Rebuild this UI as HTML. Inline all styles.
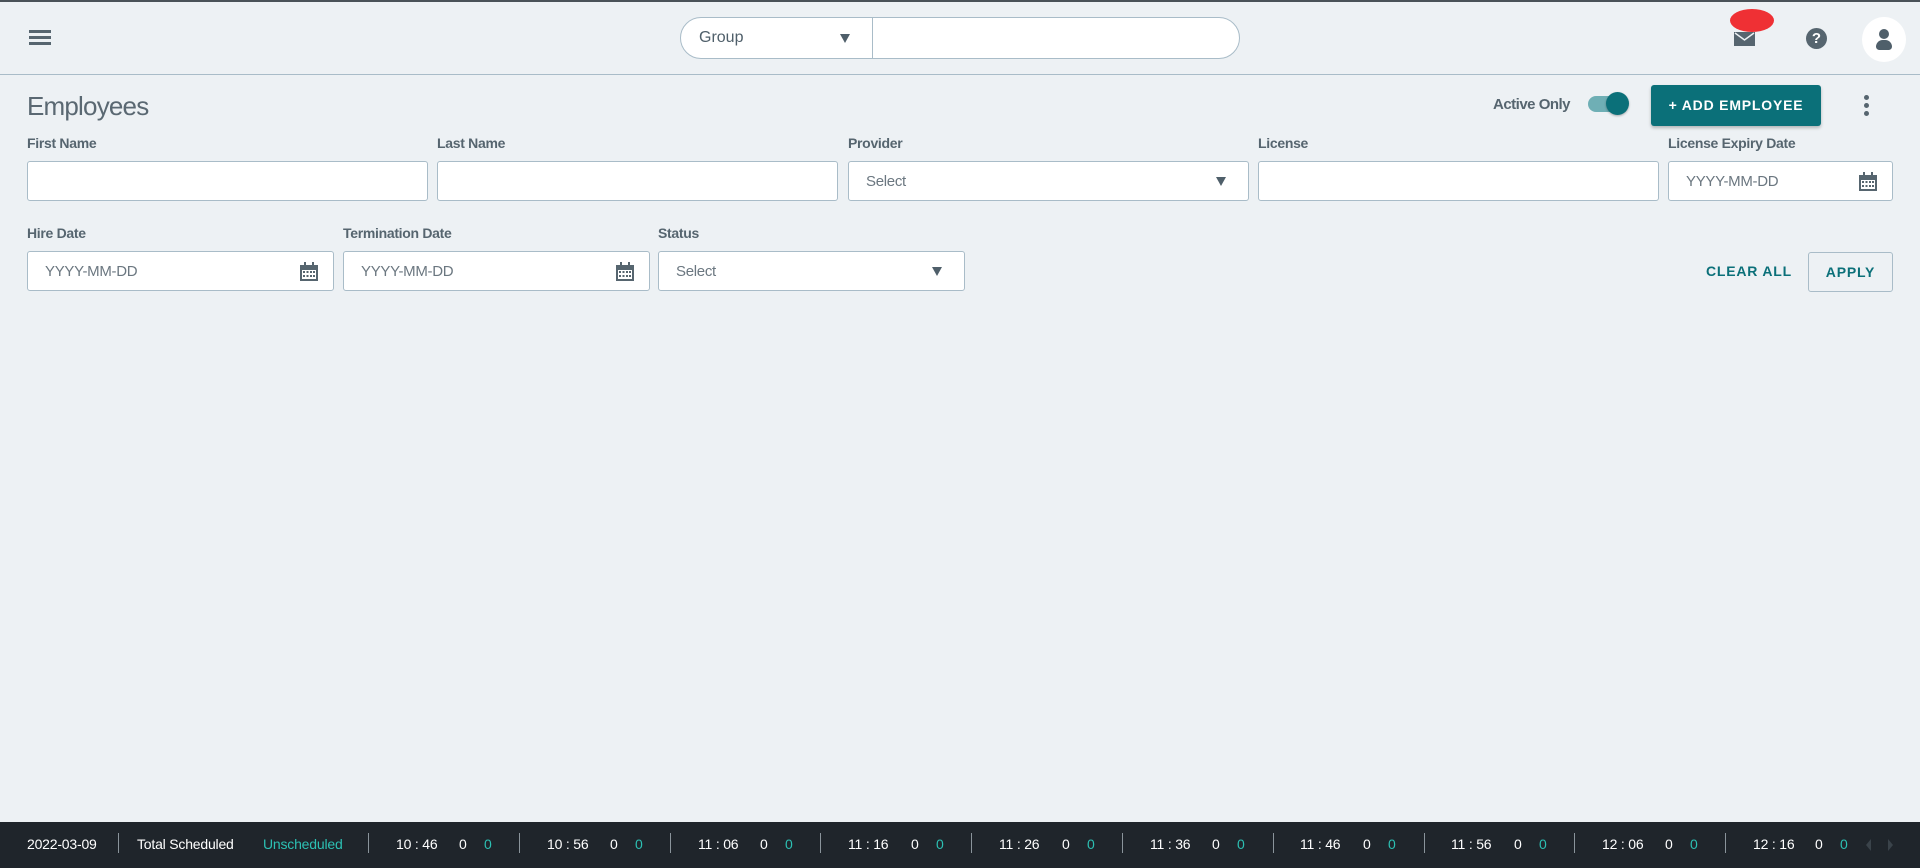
<!DOCTYPE html>
<html><head><meta charset="utf-8"><style>
*{box-sizing:border-box;margin:0;padding:0}
body{width:1920px;height:866px;background:#edf1f4;font-family:"Liberation Sans",sans-serif;color:#4f5f6a;position:relative;overflow:hidden;border-top:2px solid #4a5258}
.a{position:absolute}
.lbl{position:absolute;font-size:14px;font-weight:bold;color:#56656f;letter-spacing:-0.3px}
.in{position:absolute;background:#fff;border:1px solid #a9bcc8;border-radius:3px;height:40px}
.ph{position:absolute;left:17px;top:11px;font-size:15px;color:#6b7780;letter-spacing:-0.3px}
.tri{position:absolute;width:0;height:0;border-left:5px solid transparent;border-right:5px solid transparent;border-top:9px solid #4f5f6a}
.cal{position:absolute;right:14px;top:10px}
.f{position:absolute;top:834px;font-size:14px;color:#fff;letter-spacing:-0.2px}
.t{color:#2cc0b3}
.dv{position:absolute;top:831px;width:1px;height:20px;background:#8a949b}
</style></head><body>
<div class="a" style="left:29px;top:28px;width:22px;height:3px;background:#56656f;box-shadow:0 6px 0 #56656f,0 12px 0 #56656f"></div>
<div class="a" style="left:680px;top:15px;width:560px;height:42px;background:#fff;border:1px solid #a9bcc8;border-radius:21px"></div>
<div class="a" style="left:872px;top:16px;width:1px;height:40px;background:#a9bcc8"></div>
<div class="a" style="left:699px;top:27px;font-size:16px;color:#4f5f6a">Group</div>
<div class="tri" style="left:840px;top:32px"></div>
<div class="a" style="left:0;top:72px;width:1920px;height:1px;background:#a9bcc8"></div>
<div class="a" style="left:1730px;top:7px;width:44px;height:23px;border-radius:50%;background:#ef3034"></div>
<div class="a" style="left:1734px;top:30px;width:21px;height:14px;background:#56656f"></div>
<svg class="a" style="left:1734px;top:30px" width="21" height="14"><path d="M1 1 L10.5 8 L20 1" stroke="#edf1f4" stroke-width="1.5" fill="none"/></svg>
<div class="a" style="left:1806px;top:26px;width:21px;height:21px;border-radius:50%;background:#56656f;color:#fff;font-size:15px;font-weight:bold;text-align:center;line-height:21px">?</div>
<div class="a" style="left:1862px;top:15px;width:44px;height:45px;border-radius:50%;background:#fff"></div>
<div class="a" style="left:1879px;top:27px;width:10px;height:10px;border-radius:50%;background:#4f5f6a"></div>
<div class="a" style="left:1876px;top:38px;width:16px;height:10px;border-radius:8px 8px 4px 4px;background:#4f5f6a"></div>
<div class="a" style="left:27px;top:89px;font-size:26px;color:#5a6872;letter-spacing:-0.8px">Employees</div>
<div class="a" style="left:1493px;top:94px;font-size:15px;color:#56656f;font-weight:bold;letter-spacing:-0.5px">Active Only</div>
<div class="a" style="left:1588px;top:94px;width:36px;height:16px;border-radius:8px;background:#6fafb5"></div>
<div class="a" style="left:1606px;top:90px;width:23px;height:23px;border-radius:50%;background:#0b7079;box-shadow:0 1px 2px rgba(0,0,0,.3)"></div>
<div class="a" style="left:1651px;top:83px;width:170px;height:41px;border-radius:3px;background:#0b7079;color:#fff;font-size:14px;font-weight:bold;letter-spacing:0.8px;text-align:center;line-height:41px;box-shadow:0 2px 3px rgba(0,0,0,.25)">+ ADD EMPLOYEE</div>
<div class="a" style="left:1864px;top:93px;width:5px;height:5px;border-radius:50%;background:#56656f;box-shadow:0 8px 0 #56656f,0 16px 0 #56656f"></div>

<div class="lbl" style="left:27px;top:133px">First Name</div>
<div class="lbl" style="left:437px;top:133px">Last Name</div>
<div class="lbl" style="left:848px;top:133px">Provider</div>
<div class="lbl" style="left:1258px;top:133px">License</div>
<div class="lbl" style="left:1668px;top:133px">License Expiry Date</div>
<div class="in" style="left:27px;top:159px;width:401px"></div>
<div class="in" style="left:437px;top:159px;width:401px"></div>
<div class="in" style="left:848px;top:159px;width:401px"><div class="ph">Select</div><div class="tri" style="right:22px;top:15px"></div></div>
<div class="in" style="left:1258px;top:159px;width:401px"></div>
<div class="in" style="left:1668px;top:159px;width:225px"><div class="ph">YYYY-MM-DD</div>
<svg class="cal" width="20" height="20"><rect x="1" y="3" width="18" height="16" fill="#56656f"/><rect x="3" y="8" width="14" height="9" fill="#fff"/><g fill="#56656f"><rect x="4" y="9" width="2" height="2"/><rect x="7.5" y="9" width="2" height="2"/><rect x="11" y="9" width="2" height="2"/><rect x="14" y="9" width="2" height="2"/><rect x="4" y="13" width="2" height="2"/><rect x="7.5" y="13" width="2" height="2"/><rect x="11" y="13" width="2" height="2"/><rect x="14" y="13" width="2" height="2"/><rect x="5" y="0" width="2" height="5"/><rect x="13" y="0" width="2" height="5"/></g></svg></div>

<div class="lbl" style="left:27px;top:223px">Hire Date</div>
<div class="lbl" style="left:343px;top:223px">Termination Date</div>
<div class="lbl" style="left:658px;top:223px">Status</div>
<div class="in" style="left:27px;top:249px;width:307px"><div class="ph">YYYY-MM-DD</div>
<svg class="cal" width="20" height="20"><rect x="1" y="3" width="18" height="16" fill="#56656f"/><rect x="3" y="8" width="14" height="9" fill="#fff"/><g fill="#56656f"><rect x="4" y="9" width="2" height="2"/><rect x="7.5" y="9" width="2" height="2"/><rect x="11" y="9" width="2" height="2"/><rect x="14" y="9" width="2" height="2"/><rect x="4" y="13" width="2" height="2"/><rect x="7.5" y="13" width="2" height="2"/><rect x="11" y="13" width="2" height="2"/><rect x="14" y="13" width="2" height="2"/><rect x="5" y="0" width="2" height="5"/><rect x="13" y="0" width="2" height="5"/></g></svg></div>
<div class="in" style="left:343px;top:249px;width:307px"><div class="ph">YYYY-MM-DD</div>
<svg class="cal" width="20" height="20"><rect x="1" y="3" width="18" height="16" fill="#56656f"/><rect x="3" y="8" width="14" height="9" fill="#fff"/><g fill="#56656f"><rect x="4" y="9" width="2" height="2"/><rect x="7.5" y="9" width="2" height="2"/><rect x="11" y="9" width="2" height="2"/><rect x="14" y="9" width="2" height="2"/><rect x="4" y="13" width="2" height="2"/><rect x="7.5" y="13" width="2" height="2"/><rect x="11" y="13" width="2" height="2"/><rect x="14" y="13" width="2" height="2"/><rect x="5" y="0" width="2" height="5"/><rect x="13" y="0" width="2" height="5"/></g></svg></div>
<div class="in" style="left:658px;top:249px;width:307px"><div class="ph">Select</div><div class="tri" style="right:22px;top:15px"></div></div>
<div class="a" style="left:1706px;top:261px;font-size:14px;font-weight:bold;color:#0b7079;letter-spacing:0.8px">CLEAR ALL</div>
<div class="a" style="left:1808px;top:250px;width:85px;height:40px;border:1px solid #a9bcc8;border-radius:3px;font-size:14px;font-weight:bold;color:#0b7079;letter-spacing:0.8px;text-align:center;line-height:38px">APPLY</div>

<div class="a" style="left:0;top:820px;width:1920px;height:46px;background:#1f252b"></div>
<div class="f" style="left:27px">2022-03-09</div>
<div class="dv" style="left:118px"></div>
<div class="f" style="left:137px">Total Scheduled</div>
<div class="f t" style="left:263px">Unscheduled</div>
<div class="dv" style="left:368px"></div>
<div class="f" style="left:396px">10 : 46</div><div class="f" style="left:459px">0</div><div class="f t" style="left:484px">0</div><div class="dv" style="left:519px"></div>
<div class="f" style="left:547px">10 : 56</div><div class="f" style="left:610px">0</div><div class="f t" style="left:635px">0</div><div class="dv" style="left:670px"></div>
<div class="f" style="left:698px">11 : 06</div><div class="f" style="left:760px">0</div><div class="f t" style="left:785px">0</div><div class="dv" style="left:820px"></div>
<div class="f" style="left:848px">11 : 16</div><div class="f" style="left:911px">0</div><div class="f t" style="left:936px">0</div><div class="dv" style="left:971px"></div>
<div class="f" style="left:999px">11 : 26</div><div class="f" style="left:1062px">0</div><div class="f t" style="left:1087px">0</div><div class="dv" style="left:1122px"></div>
<div class="f" style="left:1150px">11 : 36</div><div class="f" style="left:1212px">0</div><div class="f t" style="left:1237px">0</div><div class="dv" style="left:1273px"></div>
<div class="f" style="left:1300px">11 : 46</div><div class="f" style="left:1363px">0</div><div class="f t" style="left:1388px">0</div><div class="dv" style="left:1424px"></div>
<div class="f" style="left:1451px">11 : 56</div><div class="f" style="left:1514px">0</div><div class="f t" style="left:1539px">0</div><div class="dv" style="left:1574px"></div>
<div class="f" style="left:1602px">12 : 06</div><div class="f" style="left:1665px">0</div><div class="f t" style="left:1690px">0</div><div class="dv" style="left:1725px"></div>
<div class="f" style="left:1753px">12 : 16</div><div class="f" style="left:1815px">0</div><div class="f t" style="left:1840px">0</div>
<div class="a" style="left:1866px;top:837px;border-right:5px solid #3a434a;border-top:6px solid transparent;border-bottom:6px solid transparent"></div>
<div class="a" style="left:1888px;top:837px;border-left:5px solid #3a434a;border-top:6px solid transparent;border-bottom:6px solid transparent"></div>
</body></html>
